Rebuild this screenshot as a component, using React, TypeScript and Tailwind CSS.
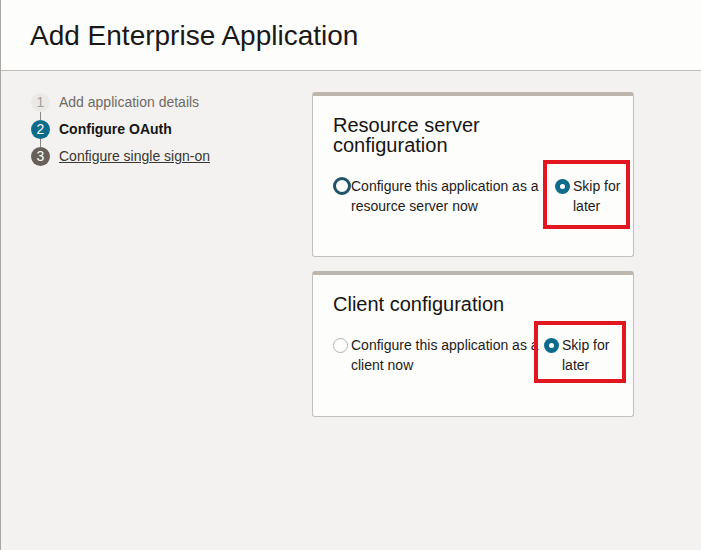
import React from "react";

const font = { fontFamily: '"Liberation Sans", Arial, sans-serif' };

function Step({ n, label, state }: { n: number; label: string; state: "done" | "current" | "next" }) {
  const circle =
    state === "current"
      ? "bg-[#0d6b8c] text-white"
      : state === "next"
      ? "bg-[#67605a] text-white"
      : "bg-[#ebe9e6] text-[#a29d97]";
  const text =
    state === "current"
      ? "font-bold text-[#161513]"
      : state === "next"
      ? "text-[#3a3633] underline"
      : "text-[#6f6a65]";
  return (
    <div className="flex items-center h-[18px]">
      <div className={`w-[19px] h-[19px] rounded-full flex items-center justify-center text-[14px] ${circle}`}>{n}</div>
      <span className={`ml-[9px] text-[14px] leading-[18px] ${text}`}>{label}</span>
    </div>
  );
}

function Connector() {
  return <div className="ml-[9px] w-px h-[9px] bg-[#8d8782]" />;
}

function Radio({ checked, focused }: { checked?: boolean; focused?: boolean }) {
  if (checked) {
    return (
      <span className="shrink-0 w-[15px] h-[15px] rounded-full bg-[#0d6b8c] flex items-center justify-center">
        <span className="w-[5px] h-[5px] rounded-full bg-white" />
      </span>
    );
  }
  if (focused) {
    return <span className="block shrink-0 w-[18px] h-[18px] rounded-full border-[3px] border-[#1f5467]" />;
  }
  return <span className="block shrink-0 w-[15px] h-[15px] rounded-full border border-[#b5b1ac] bg-white" />;
}

function Card({ children, className = "" }: { children: React.ReactNode; className?: string }) {
  return (
    <div
      className={`w-[322px] bg-[#fdfdfc] border border-[#c3c0bc] border-t-4 border-t-[#bcb6af] rounded-[3px] ${className}`}
    >
      {children}
    </div>
  );
}

export default function App() {
  return (
    <div className="w-[701px] h-[550px] bg-[#f3f2f0] border-l border-[#a9a6a2] text-[#1d1b19]" style={font}>
      <header className="h-[71px] bg-[#fdfdfc] border-b border-[#c0bcb6] pl-[29px] pt-[20px]">
        <h1 className="text-[28px] leading-[32px] text-[#1a1816]">Add Enterprise Application</h1>
      </header>

      <div className="flex">
        <div className="w-[311px] pl-[30px] pt-[22px]">
          <Step n={1} label="Add application details" state="done" />
          <Connector />
          <Step n={2} label="Configure OAuth" state="current" />
          <Connector />
          <Step n={3} label="Configure single sign-on" state="next" />
        </div>

        <div className="pt-[21px] flex flex-col gap-[14px]">
          <Card className="h-[165px] pl-[20px] pt-[19px]">
            <h2 className="text-[20px] leading-[20px] text-[#161513]">
              Resource server
              <br />
              configuration
            </h2>
            <div className="flex items-start mt-[5px]">
              <label className="w-[210px] flex items-start text-[14px] leading-[20px] pt-[16px]">
                <span className="flex mt-px">
                  <Radio focused />
                </span>
                <span>
                  Configure this application as a
                  <br />
                  resource server now
                </span>
              </label>
              <div className="w-[87px] h-[69px] border-4 border-[#e3151e] pl-[8px] pt-[12px]">
                <label className="flex items-start text-[14px] leading-[20px]">
                  <span className="flex mt-[3px]">
                    <Radio checked />
                  </span>
                  <span className="ml-[3px]">
                    Skip for
                    <br />
                    later
                  </span>
                </label>
              </div>
            </div>
          </Card>

          <Card className="h-[146px] pl-[20px] pt-[19px]">
            <h2 className="text-[20px] leading-[20px] text-[#161513]">Client configuration</h2>
            <div className="flex items-start mt-[7px]">
              <label className="w-[201px] flex items-start text-[14px] leading-[20px] pt-[14px]">
                <span className="flex mt-[3px]">
                  <Radio />
                </span>
                <span className="ml-[3px] whitespace-nowrap">
                  Configure this application as a
                  <br />
                  client now
                </span>
              </label>
              <div className="w-[92px] h-[62px] border-4 border-[#e3151e] pl-[6px] pt-[10px]">
                <label className="flex items-start text-[14px] leading-[20px]">
                  <span className="flex mt-[3px]">
                    <Radio checked />
                  </span>
                  <span className="ml-[3px]">
                    Skip for
                    <br />
                    later
                  </span>
                </label>
              </div>
            </div>
          </Card>
        </div>
      </div>
    </div>
  );
}
